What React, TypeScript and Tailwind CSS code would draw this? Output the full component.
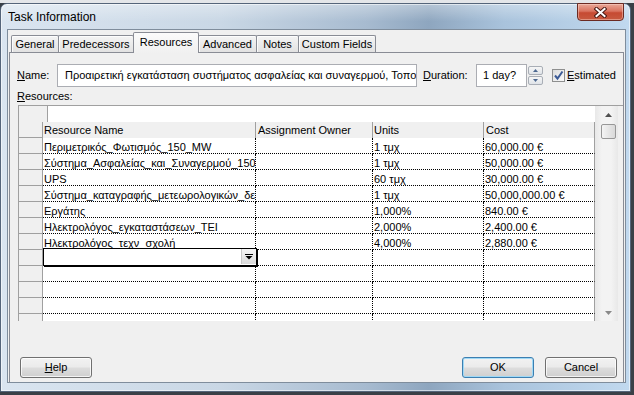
import React from 'react';

interface ResourceRow {
  name: string;
  units: string;
  cost: string;
}

const resources: ResourceRow[] = [
  { name: 'Περιμετρικός_Φωτισμός_150_MW', units: '1 τμχ', cost: '60,000.00 €' },
  { name: 'Σύστημα_Ασφαλείας_και_Συναγερμού_150_MW', units: '1 τμχ', cost: '50,000.00 €' },
  { name: 'UPS', units: '60 τμχ', cost: '30,000.00 €' },
  { name: 'Σύστημα_καταγραφής_μετεωρολογικών_δεδομένων', units: '1 τμχ', cost: '50,000,000.00 €' },
  { name: 'Εργάτης', units: '1,000%', cost: '840.00 €' },
  { name: 'Ηλεκτρολόγος_εγκαταστάσεων_ΤΕΙ', units: '2,000%', cost: '2,400.00 €' },
  { name: 'Ηλεκτρολόγος_τεχν_σχολή', units: '4,000%', cost: '2,880.00 €' },
  { name: '', units: '', cost: '' },
  { name: '', units: '', cost: '' },
  { name: '', units: '', cost: '' },
  { name: '', units: '', cost: '' },
  { name: '', units: '', cost: '' },
];

const tabs = [
  { label: 'General', cls: 'w-[48px]' },
  { label: 'Predecessors', cls: 'w-[76px] -ml-px' },
  { label: 'Resources', cls: 'w-[66px] -ml-px', selected: true },
  { label: 'Advanced', cls: 'w-[59px] -ml-px' },
  { label: 'Notes', cls: 'w-[43px] -ml-px' },
  { label: 'Custom Fields', cls: 'w-[78px] -ml-px' },
];

const dotted = 'border-r border-b border-dotted border-black';

const DataRow = ({ row, editing }: { row: ResourceRow; editing?: boolean }) => (
  <div className="flex h-[16px] shrink-0">
    <div className="w-[24px] shrink-0 bg-[#f0f0f0] border-r border-b border-[#a0a0a0]" />
    <div className={`relative w-[213px] shrink-0 ${dotted}`}>
      <div className="h-full overflow-hidden whitespace-nowrap pl-[1px] leading-[18px]">{row.name}</div>
      {editing && (
        <div className="absolute left-0 -top-[2px] z-10 w-[214px] h-[18px] border border-black bg-white shadow-[1px_1px_0_#000]">
          <div className="absolute right-0 top-0 w-[15px] h-[15px] flex items-center justify-center bg-[linear-gradient(180deg,#f4f4f4,#dcdcdc)] border-l border-[#c8c8c8]">
            <svg width="8" height="6" viewBox="0 0 8 6">
              <rect x="0" y="0" width="8" height="1" fill="#000" />
              <path d="M0.5 2 L7.5 2 L4 5.5 Z" fill="#000" />
            </svg>
          </div>
        </div>
      )}
    </div>
    <div className={`w-[117px] shrink-0 ${dotted}`} />
    <div className={`w-[111px] shrink-0 overflow-hidden whitespace-nowrap pl-[1px] leading-[18px] ${dotted}`}>
      {row.units}
    </div>
    <div className="w-[111px] shrink-0 overflow-hidden whitespace-nowrap pl-[1px] leading-[18px] border-r border-b border-dotted border-black [border-right-style:solid] border-r-[#a0a0a0]">
      {row.cost}
    </div>
  </div>
);

const WinButton = ({ children, primary }: { children: React.ReactNode; primary?: boolean }) => (
  <div
    className={`w-[72px] h-[21px] rounded-[3px] border flex items-center justify-center bg-[linear-gradient(180deg,#f2f2f2_0%,#ebebeb_48%,#dddddd_52%,#cfcfcf_100%)] ${
      primary
        ? 'border-[#3c7fb1] shadow-[inset_0_0_0_1px_#9fd9f6]'
        : 'border-[#707070] shadow-[inset_0_0_0_1px_rgba(255,255,255,0.75)]'
    }`}
  >
    {children}
  </div>
);

export default function App() {
  return (
    <div className="w-[634px] h-[395px] overflow-hidden bg-[#3a4047] font-['Liberation_Sans',Arial,sans-serif] text-[11px] text-black">
      <div className="h-[3px] bg-[#e4e6e9]" />

      {/* window frame */}
      <div className="w-[631px] h-[389px] flex flex-col rounded-t-[7px] border border-[#55657a] bg-[linear-gradient(90deg,#dae5f0_0%,#c9d7e5_35%,#a7bbd0_58%,#8ea6bf_68%,#a9c3dc_80%,#c1d9ef_100%)] shadow-[inset_0_0_0_1px_rgba(255,255,255,0.55)]">
        {/* title bar */}
        <div className="h-[25px] shrink-0 flex items-center justify-between pl-[7px] pr-[6px] bg-[linear-gradient(180deg,rgba(255,255,255,0.35),rgba(255,255,255,0)_70%)] rounded-t-[6px]">
          <span className="text-[12px] leading-none">Task Information</span>
          <div className="self-start -mt-px w-[47px] h-[18px] rounded-b-[4px] border border-[#6b2a22] flex items-center justify-center bg-[linear-gradient(180deg,#e9a898_0%,#d9735f_45%,#c64a32_55%,#c75a40_100%)] shadow-[inset_0_0_0_1px_rgba(255,220,210,0.45)]">
            <svg width="13" height="11" viewBox="0 0 13 11">
              <path d="M2.5 2 L10.5 9 M10.5 2 L2.5 9" stroke="#4a1a14" strokeWidth="4" strokeLinecap="square" />
              <path d="M2.5 2 L10.5 9 M10.5 2 L2.5 9" stroke="#fff" strokeWidth="2" strokeLinecap="square" />
            </svg>
          </div>
        </div>

        {/* client area */}
        <div className="flex pl-[6px] pr-[4px]">
          <div className="w-[619px] h-[354px] flex flex-col overflow-hidden border border-[#7f8d9c] bg-[#f0f0f0]">
            {/* tabs */}
            <div className="flex items-end h-[22px] shrink-0 pl-[3px]">
              {tabs.map((t) =>
                t.selected ? (
                  <div
                    key={t.label}
                    className={`${t.cls} relative z-10 h-[21px] -mb-px rounded-t-[2px] border border-b-0 border-[#898c95] bg-[linear-gradient(180deg,#fbfbfb,#f0f0f0)] flex justify-center pt-[2px] leading-[14px]`}
                  >
                    {t.label}
                  </div>
                ) : (
                  <div
                    key={t.label}
                    className={`${t.cls} h-[17px] rounded-t-[2px] border border-b-0 border-[#898c95] bg-[linear-gradient(180deg,#f4f4f4,#e2e2e2)] shadow-[inset_1px_1px_0_rgba(255,255,255,0.8)] flex items-center justify-center`}
                  >
                    {t.label}
                  </div>
                )
              )}
            </div>

            {/* tab panel */}
            <div className="ml-[1px] w-[615px] flex-1 flex flex-col border-t border-l border-r border-[#898c95] bg-[#f0f0f0]">
              {/* name row */}
              <div className="flex items-center h-[23px] mt-[11px] ml-[7px]">
                <span className="w-[40px]">
                  <span className="underline">N</span>ame:
                </span>
                <div className="w-[360px] h-[23px] border border-[#abadb3] bg-white pl-[7px] flex items-center overflow-hidden whitespace-nowrap">
                  Προαιρετική εγκατάσταση συστήματος ασφαλείας και συναγερμού, Τοποθέτηση
                </div>
                <span className="ml-[6px] w-[53px]">
                  <span className="underline">D</span>uration:
                </span>
                <div className="w-[51px] h-[23px] border border-[#abadb3] bg-white pl-[6px] flex items-center">1 day?</div>
                <div className="ml-[1px] w-[15px] h-[19px] flex flex-col gap-[1px]">
                  <div className="flex-1 rounded-[2px] border border-[#a9aeb6] bg-[linear-gradient(180deg,#f6f6f6,#dfe3e8)] flex items-center justify-center">
                    <svg width="5" height="3" viewBox="0 0 5 3">
                      <path d="M0 3 L2.5 0 L5 3 Z" fill="#4d6890" />
                    </svg>
                  </div>
                  <div className="flex-1 rounded-[2px] border border-[#a9aeb6] bg-[linear-gradient(180deg,#f6f6f6,#dfe3e8)] flex items-center justify-center">
                    <svg width="5" height="3" viewBox="0 0 5 3">
                      <path d="M0 0 L5 0 L2.5 3 Z" fill="#4d6890" />
                    </svg>
                  </div>
                </div>
                <div className="ml-[9px] w-[13px] h-[13px] border border-[#8e8f8f] bg-[linear-gradient(135deg,#dcdcdc,#fbfbfb)] flex items-center justify-center">
                  <svg width="11" height="11" viewBox="0 0 11 11">
                    <path d="M2 5.5 L4.5 8.5 L9.5 1.5" stroke="#3c5a96" strokeWidth="2" fill="none" />
                  </svg>
                </div>
                <span className="ml-[2px]">
                  <span className="underline">E</span>stimated
                </span>
              </div>

              <div className="mt-[3px] ml-[7px] h-[13px] leading-[13px]">
                <span className="underline">R</span>esources:
              </div>

              {/* resources grid */}
              <div className="mt-[2px] ml-[8px] flex border-t border-l border-[#a0a0a0]">
                <div className="w-[576px] h-[215px] flex flex-col overflow-hidden bg-white">
                  <div className="flex h-[16px] shrink-0">
                    <div className="w-[29px] bg-[#f0f0f0] border-r border-[#a0a0a0]" />
                    <div className="flex-1 bg-white" />
                  </div>
                  <div className="flex h-[16px] shrink-0 bg-[#f0f0f0] leading-[16px]">
                    <div className="w-[24px] shrink-0 border-r border-b border-[#a0a0a0]" />
                    <div className="w-[213px] shrink-0 border-r border-[#a0a0a0] pl-[1px]">Resource Name</div>
                    <div className="w-[117px] shrink-0 border-r border-[#a0a0a0] pl-[2px] whitespace-nowrap">Assignment Owner</div>
                    <div className="w-[111px] shrink-0 border-r border-[#a0a0a0] pl-[1px]">Units</div>
                    <div className="w-[111px] shrink-0 border-r border-[#a0a0a0] pl-[2px]">Cost</div>
                  </div>
                  {resources.map((r, i) => (
                    <DataRow key={i} row={r} editing={i === 7} />
                  ))}
                </div>

                {/* scrollbar */}
                <div className="w-[23px] h-[215px] bg-[linear-gradient(90deg,#e8e8e8,#f3f3f3_30%,#f3f3f3_70%,#e8e8e8)]">
                  <div className="ml-[6px] w-[15px] h-full flex flex-col">
                    <div className="h-[17px] flex items-center justify-center">
                      <svg width="7" height="4" viewBox="0 0 7 4">
                        <path d="M0 4 L3.5 0 L7 4 Z" fill="#505050" />
                      </svg>
                    </div>
                    <div className="mt-[1px] h-[15px] rounded-[2px] border border-[#979797] bg-[linear-gradient(90deg,#f4f4f4,#e6e6e6_50%,#d9d9d9)]" />
                    <div className="flex-1" />
                    <div className="h-[17px] flex items-center justify-center">
                      <svg width="7" height="4" viewBox="0 0 7 4">
                        <path d="M0 0 L7 0 L3.5 4 Z" fill="#8a8a8a" />
                      </svg>
                    </div>
                  </div>
                </div>
              </div>

              {/* buttons */}
              <div className="mt-[36px] flex items-center pl-[10px] pr-[6px]">
                <WinButton>
                  <span>
                    <span className="underline">H</span>elp
                  </span>
                </WinButton>
                <div className="flex-1" />
                <WinButton primary>OK</WinButton>
                <div className="w-[11px]" />
                <WinButton>Cancel</WinButton>
              </div>
            </div>
          </div>
        </div>
      </div>
    </div>
  );
}
